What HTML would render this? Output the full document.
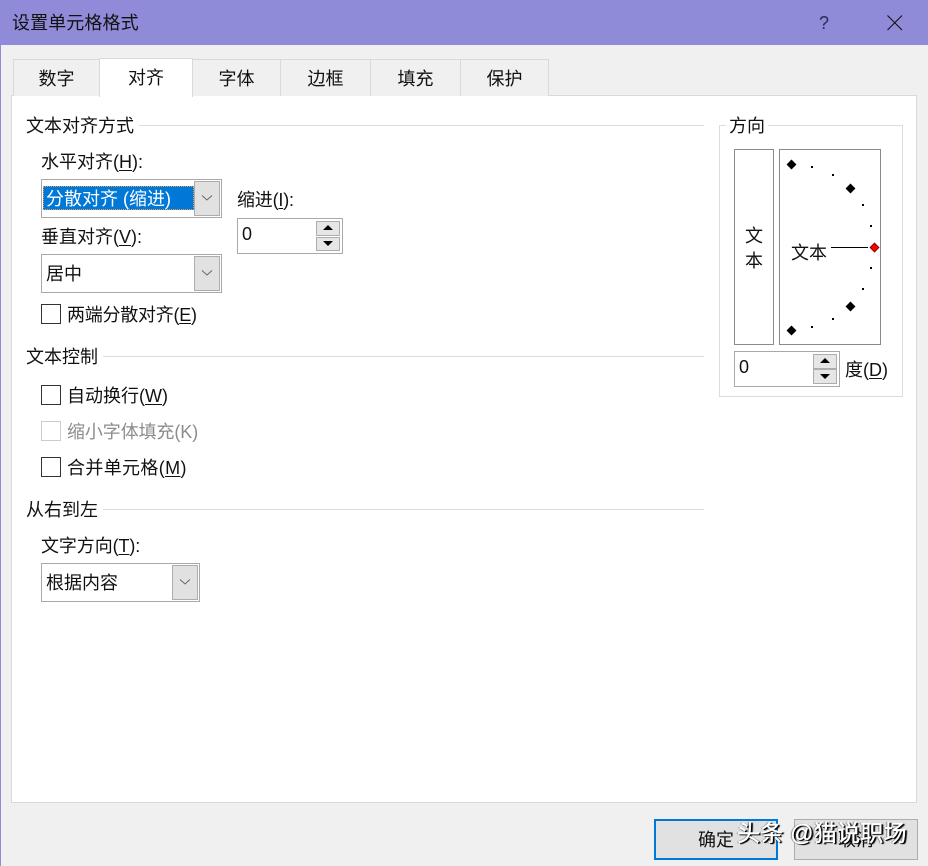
<!DOCTYPE html>
<html><head><meta charset="utf-8">
<style>
html,body{margin:0;padding:0;background:#f0f0f0}
#w{position:relative;width:928px;height:866px;overflow:hidden;background:#f0f0f0;font-family:"Liberation Sans","Noto Sans CJK SC",sans-serif;font-size:18px;color:#111}
#w div{position:absolute;box-sizing:border-box}
.t{line-height:24px;height:24px;white-space:nowrap}
.tab{top:59px;height:37px;border:1px solid #d9d9d9;border-bottom:none;background:#f0f0f0;text-align:center;line-height:38px}
.ln{height:1px;background:#dcdcdc}
.cb{background:#fff;border:1px solid #a9a9a9}
.dd{background:#e1e1e1;border:1px solid #adadad}
.ck{width:20px;height:20px;border:1px solid #333;background:#fff}
.sp{background:#e6e6e6;border:1px solid #adadad}
.d{width:2px;height:2px;background:#000}
.dm{width:7px;height:7px;background:#000;transform:rotate(45deg)}
u{text-underline-offset:2px}
</style></head><body><div id="w">
<div style="left:0;top:0;width:928px;height:45px;background:#8f8bd9"></div>
<div style="left:0;top:45px;width:1px;height:821px;background:#8f8bd9"></div>
<div class="t" style="left:12px;top:11px;letter-spacing:.1px">设置单元格格式</div>
<div class="t" style="left:819px;top:11px;color:#2b2b55">?</div>
<svg style="position:absolute;left:886px;top:14px" width="18" height="18"><path d="M1.500 1.500L16 16M16 1.500L1.500 16" stroke="#111" stroke-width="1.100" fill="none"/></svg>

<div style="left:11px;top:95px;width:906px;height:708px;background:#fff;border:1px solid #d9d9d9"></div>
<div class="tab" style="left:13px;width:87px">数字</div>
<div class="tab" style="left:192px;width:89px">字体</div>
<div class="tab" style="left:280px;width:91px">边框</div>
<div class="tab" style="left:370px;width:91px">填充</div>
<div class="tab" style="left:460px;width:89px">保护</div>
<div class="tab" style="left:99px;top:58px;width:94px;height:39px;background:#fff;line-height:38px;border-bottom:none">对齐</div>

<div class="t" style="left:26px;top:114px">文本对齐方式</div>
<div class="ln" style="left:139px;top:125px;width:565px"></div>
<div class="t" style="left:41px;top:150px">水平对齐(<u>H</u>):</div>
<div class="cb" style="left:41px;top:179px;width:181px;height:39px"></div>
<div style="left:43px;top:186px;width:151px;height:24px;background:#0078d7;outline:1px dotted #e8a050;outline-offset:-1px"></div>
<div class="t" style="left:46px;top:187px;color:#fff">分散对齐 (缩进)</div>
<div class="dd" style="left:194px;top:181px;width:26px;height:35px"></div>
<svg style="position:absolute;left:201px;top:194px" width="12" height="8"><path d="M1 1.500L6 6L11 1.500" stroke="#666" fill="none"/></svg>

<div class="t" style="left:237px;top:188px;letter-spacing:-.2px">缩进(<u>I</u>):</div>
<div class="cb" style="left:237px;top:218px;width:106px;height:36px"></div>
<div class="t" style="left:242px;top:222px">0</div>
<div class="sp" style="left:316px;top:221px;width:24px;height:15px"></div>
<div class="sp" style="left:316px;top:237px;width:24px;height:14px"></div>
<svg style="position:absolute;left:316px;top:221px" width="24" height="30"><path d="M12 4L17 9H7ZM7 20H17L12 25Z" fill="#000"/></svg>

<div class="t" style="left:41px;top:225px">垂直对齐(<u>V</u>):</div>
<div class="cb" style="left:41px;top:254px;width:181px;height:39px"></div>
<div class="t" style="left:46px;top:262px">居中</div>
<div class="dd" style="left:194px;top:256px;width:26px;height:35px"></div>
<svg style="position:absolute;left:201px;top:269px" width="12" height="8"><path d="M1 1.500L6 6L11 1.500" stroke="#666" fill="none"/></svg>

<div class="ck" style="left:41px;top:304px"></div>
<div class="t" style="left:67px;top:303px;letter-spacing:-.25px">两端分散对齐(<u>E</u>)</div>

<div class="t" style="left:26px;top:345px">文本控制</div>
<div class="ln" style="left:103px;top:356px;width:601px"></div>
<div class="ck" style="left:41px;top:385px"></div>
<div class="t" style="left:67px;top:384px">自动换行(<u>W</u>)</div>
<div class="ck" style="left:41px;top:421px;border-color:#ccc"></div>
<div class="t" style="left:67px;top:420px;color:#8c8c8c;letter-spacing:-.1px">缩小字体填充(K)</div>
<div class="ck" style="left:41px;top:457px"></div>
<div class="t" style="left:67px;top:456px;letter-spacing:.35px">合并单元格(<u>M</u>)</div>

<div class="t" style="left:26px;top:498px">从右到左</div>
<div class="ln" style="left:103px;top:509px;width:601px"></div>
<div class="t" style="left:41px;top:534px;letter-spacing:-.1px">文字方向(<u>T</u>):</div>
<div class="cb" style="left:41px;top:563px;width:159px;height:39px"></div>
<div class="t" style="left:46px;top:571px">根据内容</div>
<div class="dd" style="left:172px;top:565px;width:26px;height:35px"></div>
<svg style="position:absolute;left:179px;top:578px" width="12" height="8"><path d="M1 1.500L6 6L11 1.500" stroke="#666" fill="none"/></svg>

<div style="left:719px;top:125px;width:184px;height:272px;border:1px solid #dcdcdc"></div>
<div class="t" style="left:726px;top:114px;width:42px;background:#fff;text-align:center">方向</div>
<div style="left:734px;top:149px;width:40px;height:196px;border:1px solid #868a91;background:#fff"></div>
<div class="t" style="left:745px;top:224px">文</div>
<div class="t" style="left:745px;top:249px">本</div>
<div style="left:779px;top:149px;width:102px;height:196px;border:1px solid #868a91;background:#fff"></div>
<div class="t" style="left:791px;top:241px">文本</div>
<div style="left:831px;top:247px;width:37px;height:1px;background:#000"></div>
<div class="dm" style="left:788px;top:161px"></div>
<div class="dm" style="left:847px;top:185px"></div>
<div class="dm" style="left:847px;top:303px"></div>
<div class="dm" style="left:788px;top:327px"></div>
<div class="dm" style="left:871px;top:244px;background:#f00;border:1px solid #800"></div>
<div class="d" style="left:811px;top:166px"></div>
<div class="d" style="left:832px;top:174px"></div>
<div class="d" style="left:862px;top:204px"></div>
<div class="d" style="left:870px;top:225px"></div>
<div class="d" style="left:870px;top:267px"></div>
<div class="d" style="left:862px;top:288px"></div>
<div class="d" style="left:832px;top:318px"></div>
<div class="d" style="left:811px;top:326px"></div>

<div class="cb" style="left:734px;top:351px;width:106px;height:36px"></div>
<div class="t" style="left:739px;top:355px">0</div>
<div class="sp" style="left:813px;top:354px;width:24px;height:15px"></div>
<div class="sp" style="left:813px;top:369px;width:24px;height:15px"></div>
<svg style="position:absolute;left:813px;top:354px" width="24" height="30"><path d="M12 4L17 9H7ZM7 20H17L12 25Z" fill="#000"/></svg>
<div class="t" style="left:845px;top:358px">度(<u>D</u>)</div>

<div style="left:654px;top:819px;width:124px;height:41px;background:#e1e1e1;border:2px solid #0078d7"></div>
<div class="t" style="left:698px;top:828px">确定</div>
<div style="left:794px;top:819px;width:124px;height:41px;background:#e1e1e1;border:1px solid #adadad"></div>
<div class="t" style="left:838px;top:828px">取消</div>
<div class="t" style="left:737px;top:821px;font-size:23px;letter-spacing:.25px;color:#fff;-webkit-text-stroke:.4px #fff;text-shadow:1px 1px 0 #000,2px 1px 1px #000,-1px 0 1px rgba(0,0,0,.5)">头条 @猫说职场</div>
</div></body></html>
